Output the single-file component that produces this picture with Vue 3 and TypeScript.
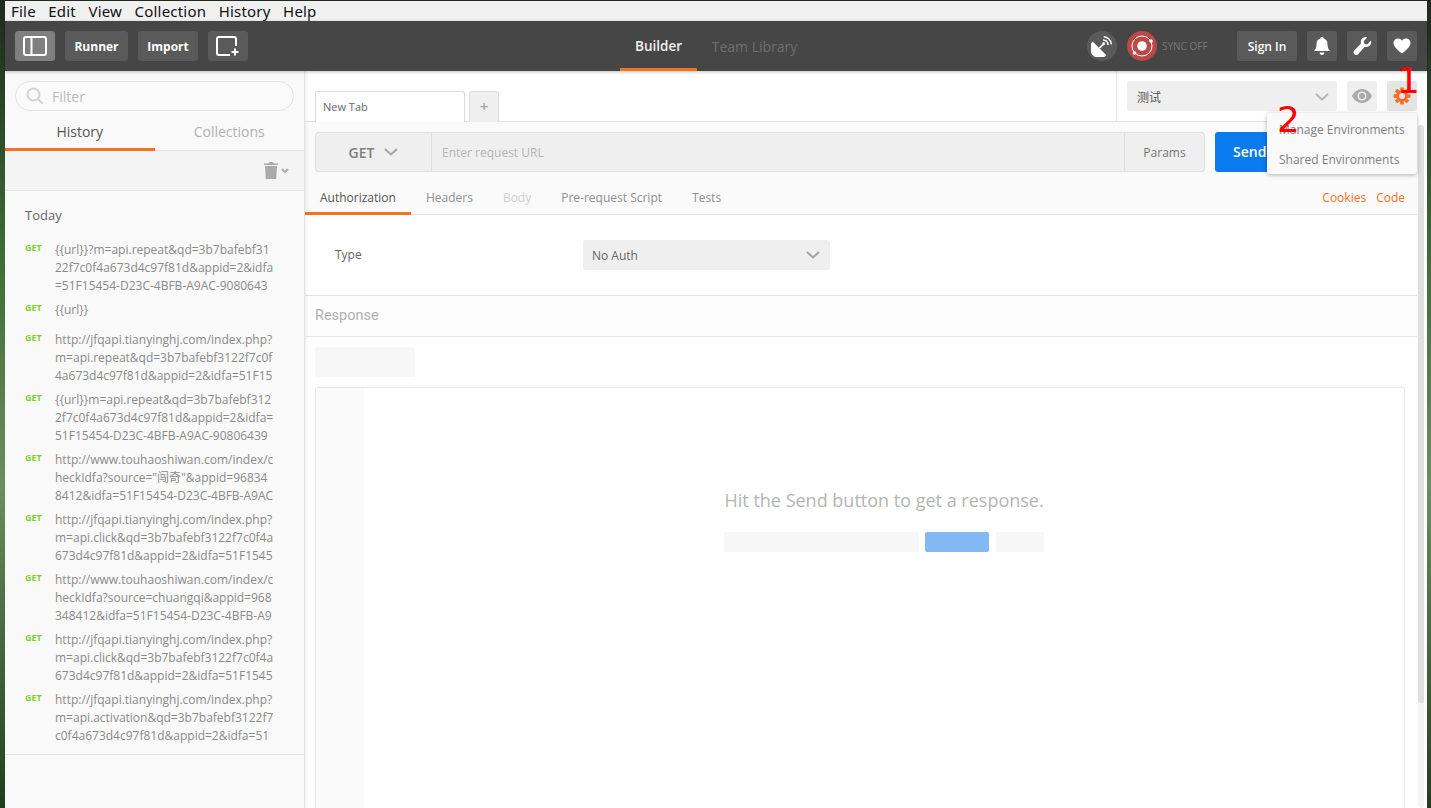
<script setup lang="ts">
interface HistoryRow { lines: string[]; tall?: boolean }
const history: HistoryRow[] = [
  { lines: ['{{url}}?m=api.repeat&qd=3b7bafebf31', '22f7c0f4a673d4c97f81d&appid=2&idfa', '=51F15454-D23C-4BFB-A9AC-9080643'] },
  { lines: ['{{url}}'], tall: true },
  { lines: ['http://jfqapi.tianyinghj.com/index.php?', 'm=api.repeat&qd=3b7bafebf3122f7c0f', '4a673d4c97f81d&appid=2&idfa=51F15'] },
  { lines: ['{{url}}m=api.repeat&qd=3b7bafebf312', '2f7c0f4a673d4c97f81d&appid=2&idfa=', '51F15454-D23C-4BFB-A9AC-90806439'] },
  { lines: ['http://www.touhaoshiwan.com/index/c', 'heckIdfa?source="闯奇"&appid=96834', '8412&idfa=51F15454-D23C-4BFB-A9AC'] },
  { lines: ['http://jfqapi.tianyinghj.com/index.php?', 'm=api.click&qd=3b7bafebf3122f7c0f4a', '673d4c97f81d&appid=2&idfa=51F1545'] },
  { lines: ['http://www.touhaoshiwan.com/index/c', 'heckIdfa?source=chuangqi&appid=968', '348412&idfa=51F15454-D23C-4BFB-A9'] },
  { lines: ['http://jfqapi.tianyinghj.com/index.php?', 'm=api.click&qd=3b7bafebf3122f7c0f4a', '673d4c97f81d&appid=2&idfa=51F1545'] },
  { lines: ['http://jfqapi.tianyinghj.com/index.php?', 'm=api.activation&qd=3b7bafebf3122f7', 'c0f4a673d4c97f81d&appid=2&idfa=51'] },
]
const menus = ['File', 'Edit', 'View', 'Collection', 'History', 'Help']
const reqTabs = [
  { label: 'Authorization', cls: 'active' },
  { label: 'Headers', cls: '' },
  { label: 'Body', cls: 'off' },
  { label: 'Pre-request Script', cls: '' },
  { label: 'Tests', cls: '' },
]
</script>

<template>
  <div class="desktop">
    <div class="window">
      <nav class="menubar">
        <span v-for="m in menus" :key="m">{{ m }}</span>
      </nav>

      <header class="toolbar">
        <div class="tb-left">
          <button class="tb-btn icon on">
            <svg width="24" height="20" viewBox="0 0 24 20" fill="none" stroke="#fff" stroke-width="2"><rect x="1" y="1" width="22" height="18" rx="2"/><path d="M8.5 1v18"/></svg>
          </button>
          <button class="tb-btn text">Runner</button>
          <button class="tb-btn text">Import</button>
          <button class="tb-btn icon">
            <svg width="24" height="20" viewBox="0 0 24 20" fill="none" stroke="#fff" stroke-width="2"><path d="M14 19H3a2 2 0 0 1-2-2V3a2 2 0 0 1 2-2h15a2 2 0 0 1 2 2v7"/><path d="M19 12.500v7M15.500 16h7"/></svg>
          </button>
        </div>
        <div class="tb-center">
          <span class="nav-tab current">Builder</span>
          <span class="nav-tab">Team Library</span>
        </div>
        <div class="tb-right">
          <span class="round sat">
            <svg width="22" height="22" viewBox="0 0 20 20" fill="#fff"><path d="M1.500 6 14 18.500A8.840 8.840 0 0 1 1.500 6z"/><path d="M7.500 12 11 8.500" stroke="#fff" stroke-width="1.500"/><circle cx="11.500" cy="8" r="1.300"/><path d="M11 4.500a4.500 4.500 0 0 1 4.500 4.500M11.500 1.500a7.500 7.500 0 0 1 7 7" fill="none" stroke="#fff" stroke-width="1.400"/></svg>
          </span>
          <span class="round sync">
            <svg width="26" height="26" viewBox="0 0 26 26" fill="none" stroke="#fff"><circle cx="13" cy="13" r="10" stroke-width="1"/><circle cx="13" cy="13" r="4.800" fill="#fff" stroke="none"/><circle cx="22" cy="8" r="1.800" fill="#fff" stroke="none"/><circle cx="5.500" cy="20" r="1.800" fill="#fff" stroke="none"/></svg>
          </span>
          <span class="sync-label">SYNC OFF</span>
          <button class="tb-btn text signin">Sign In</button>
          <button class="tb-btn square">
            <svg width="18" height="20" viewBox="0 0 18 20" fill="#fff"><path d="M9 1c.9 0 1.500.6 1.600 1.400C13.200 3 14.500 5 14.500 8c0 4 1.200 5.500 2.500 7H1c1.300-1.500 2.500-3 2.500-7 0-3 1.300-5 3.900-5.600C7.500 1.600 8.100 1 9 1z"/><path d="M6.500 16.500h5a2.500 2.500 0 0 1-5 0z"/></svg>
          </button>
          <button class="tb-btn square">
            <svg width="20" height="20" viewBox="0 0 20 20" fill="#fff"><path d="M19 4.500c.5 2 0 4-1.500 5.300-1.400 1.200-3.100 1.500-4.800 1L6.300 18a2.600 2.600 0 0 1-3.800.2 2.600 2.600 0 0 1-.2-3.800L9 7.500c-.5-1.800-.1-3.600 1.200-4.900C11.600 1.200 13.500.700 15.500 1.200L11.800 5l.6 2.800 2.800.6z"/></svg>
          </button>
          <button class="tb-btn square">
            <svg width="18" height="16" viewBox="0 0 18 16" fill="#fff"><path d="M9 15.500C3.500 11 .5 8.300.5 5A4.400 4.400 0 0 1 5 .5c1.700 0 3.100.8 4 2.200C9.900 1.300 11.300.5 13 .5A4.400 4.400 0 0 1 17.500 5c0 3.300-3 6-8.500 10.500z"/></svg>
          </button>
        </div>
      </header>

      <div class="body">
        <aside class="sidebar">
          <div class="filter-wrap">
            <div class="filter">
              <svg width="18" height="18" viewBox="0 0 18 18" fill="none" stroke="#d4d4d4" stroke-width="2"><circle cx="7.500" cy="7.500" r="6"/><path d="m12 12 4.500 4.500"/></svg>
              <span>Filter</span>
            </div>
          </div>
          <div class="side-tabs">
            <span class="side-tab current">History</span>
            <span class="side-tab">Collections</span>
          </div>
          <div class="trash-row">
            <svg width="14" height="17" viewBox="0 0 14 17" fill="#aaa"><path d="M5 0h4l.5 1.500H14V3H0V1.500h4.500zM1 4h12l-.8 13H1.800z"/></svg>
            <svg class="mini" width="8" height="6" viewBox="0 0 8 6" fill="none" stroke="#aaa" stroke-width="2"><path d="m1 1 3 3 3-3"/></svg>
          </div>
          <div class="hist">
            <div class="today">Today</div>
            <div v-for="(row, i) in history" :key="i" class="hist-row" :class="{ tall: row.tall }">
              <span class="get">GET</span>
              <div class="url"><div v-for="(l, j) in row.lines" :key="j">{{ l }}</div></div>
            </div>
          </div>
          <div class="hist-end"></div>
        </aside>

        <main class="main">
          <div class="tabstrip">
            <div class="tabs">
              <div class="tab">New Tab</div>
              <div class="tab-add">+</div>
            </div>
            <div class="env">
              <div class="env-select">
                <span>测试</span>
                <svg width="14" height="8" viewBox="0 0 14 8" fill="none" stroke="#b5b5b5" stroke-width="2"><path d="m1 1 6 5.500L13 1"/></svg>
              </div>
              <button class="env-btn">
                <svg width="20" height="14" viewBox="0 0 20 14" fill="#aaa"><path fill-rule="evenodd" d="M10 0c4.500 0 8 3 10 7-2 4-5.500 7-10 7S2 11 0 7c2-4 5.500-7 10-7zm0 2.500a4.500 4.500 0 1 0 0 9 4.500 4.500 0 0 0 0-9z"/><circle cx="10" cy="7" r="3"/></svg>
              </button>
              <button class="env-btn">
                <svg width="18" height="18" viewBox="0 0 18 18" fill="none" stroke="#f26b2a"><circle cx="9" cy="9" r="4.500" stroke-width="3"/><path stroke-width="3.500" d="M9 .5v3M9 14.500v3M.5 9h3M14.500 9h3M3 3l2.100 2.100M12.900 12.900 15 15M3 15l2.100-2.100M12.900 5.100 15 3"/></svg>
              </button>
            </div>
          </div>

          <div class="work">
            <div class="request">
              <div class="url-row">
                <div class="urlbar">
                  <div class="method">
                    <span>GET</span>
                    <svg width="14" height="8" viewBox="0 0 14 8" fill="none" stroke="#a5a5a5" stroke-width="2"><path d="m1 1 6 5.500L13 1"/></svg>
                  </div>
                  <div class="url-input">Enter request URL</div>
                  <div class="params">Params</div>
                </div>
                <div class="send">Send</div>
              </div>
              <div class="req-tabs">
                <span v-for="t in reqTabs" :key="t.label" class="req-tab" :class="t.cls">{{ t.label }}</span>
                <span class="req-links"><span>Cookies</span><span>Code</span></span>
              </div>
            </div>

            <div class="auth">
              <span class="auth-label">Type</span>
              <div class="auth-select">
                <span>No Auth</span>
                <svg width="14" height="8" viewBox="0 0 14 8" fill="none" stroke="#a5a5a5" stroke-width="2"><path d="m1 1 6 5.500L13 1"/></svg>
              </div>
            </div>

            <div class="resp-head">Response</div>
            <div class="resp-body">
              <div class="skeleton-top"></div>
              <div class="resp-card">
                <div class="gutter"></div>
                <div class="hit">
                  <div class="hit-title">Hit the Send button to get a response.</div>
                  <div class="hit-bars">
                    <span class="b1"></span><span class="b2"></span><span class="b3"></span>
                  </div>
                </div>
              </div>
            </div>
          </div>

          <div class="scroll"><div class="thumb"></div></div>

          <div class="dropdown">
            <div>Manage Environments</div>
            <div>Shared Environments</div>
          </div>
          <span class="mark one">1</span>
          <span class="mark two">2</span>
        </main>
      </div>
    </div>
  </div>
</template>

<style>
html, body { margin: 0; height: 100%; overflow: hidden; }
</style>

<style scoped>
.desktop {
  width: 1431px; height: 808px; box-sizing: border-box; overflow: hidden;
  padding: 1px 4px 0 5px;
  background: linear-gradient(180deg, #1d2a1c 0, #3c6a35 30%, #6b8f5e 60%, #1f3f1c 100%);
  font-family: "Open Sans", "Noto Sans CJK SC", sans-serif;
}
.window { height: 807px; display: flex; flex-direction: column; background: #fff; }
.menubar {
  height: 20px; flex: none; background: #f0f0f0; display: flex; gap: 12.500px; padding-left: 6px;
  font: 15px/20px "Noto Sans", sans-serif; letter-spacing: .2px; color: #111;
}
.toolbar {
  height: 50px; flex: none; background: #464646; display: flex; align-items: center; position: relative;
  box-shadow: 0 1px 3px rgba(0,0,0,.25); z-index: 3;
}
button { border: 0; padding: 0; font-family: inherit; cursor: default; }
.tb-left { display: flex; gap: 10px; padding-left: 10px; width: 600px; box-sizing: border-box; }
.tb-btn {
  height: 30px; background: #5a5a5a; border-radius: 3px; color: #fff; display: flex; align-items: center; justify-content: center;
  font-size: 12px; font-weight: 700;
}
.tb-btn.on { background: #7f7f7f; }
.tb-btn.icon { width: 40px; }
.tb-btn.text { width: 63px; }
.tb-btn.text + .tb-btn.text { width: 60px; }
.tb-center { display: flex; height: 50px; }
.nav-tab {
  width: 77px; margin-right: 5px; text-align: center; line-height: 51px; font-size: 14px; color: #6f6f6f; font-weight: 400; box-sizing: border-box; white-space: nowrap;
}
.nav-tab.current { color: #f0f0f0; font-weight: 600; font-size: 13.500px; margin-left: 15px; border-bottom: 3px solid #f47023; margin-right: 14px; }
.nav-tab:last-child { width: 87px; }
.tb-right { display: flex; align-items: center; margin-left: auto; padding-right: 10px; }
.round { width: 30px; height: 30px; border-radius: 50%; display: flex; align-items: center; justify-content: center; }
.sat { background: #5a5a5a; margin-right: 10px; }
.sync { background: #b94a48; }
.sync-label { font-size: 10px; color: #777; width: 65px; margin-left: 5px; margin-right: 10px; white-space: nowrap; }
.tb-btn.signin { width: 60px !important; margin-right: 10px; font-size: 12px; font-weight: 600; }
.tb-btn.square { width: 30px; margin-right: 10px; }
.tb-btn.square:last-child { margin-right: 0; }

.body { flex: 1; min-height: 0; display: flex; }
.sidebar {
  width: 299px; flex: none; background: #f9f9f9; border-right: 1px solid #e4e4e4; box-shadow: 1px 0 3px rgba(0,0,0,.08); z-index: 2;
  display: flex; flex-direction: column;
}
.filter-wrap { padding: 10px 10px 0; }
.filter {
  height: 30px; border: 1px solid #e2e2e2; border-radius: 15px; background: #fbfbfb; display: flex; align-items: center; gap: 8px; padding-left: 10px;
  font-size: 14px; color: #bbb; box-sizing: border-box;
}
.side-tabs { display: flex; height: 39px; border-bottom: 1px solid #e2e2e2; margin-top: 0; }
.side-tab { flex: 1; text-align: center; font-size: 14px; line-height: 41px; color: #b0b0b0; margin-bottom: -1px; box-sizing: border-box; }
.side-tab.current { color: #555; border-bottom: 3px solid #f47023; }
.trash-row {
  height: 39px; flex: none; background: #f4f4f4; border-bottom: 1px solid #e4e4e4; display: flex; align-items: center; justify-content: flex-end; gap: 3px; padding-right: 15px;
}
.hist { padding: 0 0 3px 20px; }
.today { font-size: 13px; color: #666; height: 18px; padding-top: 15px; margin-bottom: 17px; line-height: 18px; }
.hist-row { display: flex; font-size: 12px; line-height: 18px; color: #8a8a8a; height: 54px; margin-bottom: 6px; white-space: nowrap; }
.hist-row:first-of-type { margin-bottom: 7px; }
.hist-row.tall { height: 24px; margin-bottom: 6px; }
.get { width: 30px; flex: none; font-size: 9px; font-weight: 700; color: #80d030; line-height: 14px; }
.url { font-size: 12px; }
.hist-end { border-top: 1px solid #e2e2e2; }

.main { flex: 1; min-width: 0; display: flex; flex-direction: column; position: relative; }
.tabstrip { height: 50px; flex: none; display: flex; justify-content: space-between; padding-left: 10px; margin-right: 10px; border-bottom: 1px solid #e2e2e2; box-sizing: content-box; }
.tabs { display: flex; align-items: flex-end; gap: 4px; margin-bottom: -1px; }
.tab {
  width: 150px; height: 31px; box-sizing: border-box; background: #fff; border: 1px solid #dcdcdc; border-bottom: 0; border-radius: 3px 3px 0 0; padding-left: 7px; font-size: 11px; line-height: 29px; color: #666;
}
.tab-add {
  width: 30px; height: 31px; box-sizing: border-box; background: #efefef; border: 1px solid #dcdcdc; border-bottom: 0; border-radius: 3px 3px 0 0; text-align: center; font-size: 15px; line-height: 28px; font-weight: 600; color: #a5a5a5;
}
.env { width: 301px; box-sizing: border-box; border-left: 1px solid #e2e2e2; display: flex; align-items: center; gap: 10px; padding-left: 10px; padding-bottom: 0; }
.env-select { width: 210px; height: 30px; box-sizing: border-box; background: #efefef; border-radius: 3px; display: flex; align-items: center; justify-content: space-between; padding: 2px 8px 0 10px; font-size: 12px; color: #555; }
.env-btn { width: 30px; height: 30px; background: #efefef; border-radius: 3px; display: flex; align-items: center; justify-content: center; }
.env-btn:last-child { background: #e4e4e4; }

.work { flex: 1; min-height: 0; margin-right: 10px; display: flex; flex-direction: column; }
.request { background: #fafafa; height: 93px; box-sizing: border-box; padding-top: 10px; border-bottom: 1px solid #e2e2e2; flex: none; }
.url-row { display: flex; gap: 10px; padding: 0 130px 0 10px; }
.urlbar { flex: 1; display: flex; height: 40px; box-sizing: border-box; border: 1px solid #dedede; border-radius: 3px; background: #efefef; }
.method { width: 116px; box-sizing: border-box; border-right: 1px solid #dedede; display: flex; align-items: center; justify-content: center; gap: 10px; font-size: 14px; font-weight: 600; color: #808080; }
.url-input { flex: 1; padding-left: 10px; font-size: 12px; line-height: 40px; color: #b4b4b4; }
.params { width: 80px; box-sizing: border-box; border-left: 1px solid #dedede; text-align: center; font-size: 12px; line-height: 40px; color: #777; }
.send { width: 72px; height: 40px; box-sizing: border-box; background: #097bed; border-radius: 3px; color: #fff; font-size: 14px; font-weight: 600; line-height: 40px; padding-left: 18px; }
.req-tabs { display: flex; height: 33px; margin-top: 10px; font-size: 12px; line-height: 32px; color: #8f8f8f; }
.req-tab { padding: 0 15px; box-sizing: border-box; white-space: nowrap; }
.req-tab.active { color: #555; border-bottom: 3px solid #f47023; height: 33px; }
.req-tab.off { color: #cfcfcf; }
.req-links { margin-left: auto; display: flex; gap: 10px; color: #f47023; padding-right: 12px; }
.auth { height: 81px; box-sizing: border-box; flex: none; border-bottom: 1px solid #e2e2e2; display: flex; align-items: center; padding-left: 30px; font-size: 12px; color: #666; }
.auth-label { width: 248px; margin-top: -2px; }
.auth-select { width: 247px; height: 30px; box-sizing: border-box; background: #efefef; border-radius: 3px; display: flex; align-items: center; justify-content: space-between; padding: 0 10px 0 9px; color: #666; }
.resp-head { height: 41px; flex: none; box-sizing: border-box; border-bottom: 1px solid #e8e8e8; padding-left: 10px; font: 14.500px/40px Roboto, sans-serif; color: #b0b0b0; background: #fdfdfd; }
.resp-body { flex: 1; min-height: 0; padding: 10px 12px 0 10px; }
.skeleton-top { width: 100px; height: 30px; background: #f7f7f7; border-radius: 2px; }
.resp-card { margin-top: 10px; height: 480px; box-sizing: border-box; border: 1px solid #e9e9e9; border-bottom: 0; border-radius: 3px 3px 0 0; display: flex; }
.gutter { width: 48px; background: #fafafa; }
.hit { padding: 100px 0 0 360px; }
.hit-title { font-size: 18px; color: #b5b5b5; white-space: nowrap; line-height: 24px; padding-left: .5px; }
.hit-bars { display: flex; gap: 6px; margin-top: 20px; }
.hit-bars span { height: 20px; border-radius: 2px; display: block; }
.b1 { width: 195px; background: #f7f7f7; }
.b2 { width: 64px; background: #83b9f3; }
.b3 { width: 48px; margin-left: 1px; background: #f7f7f7; }
.scroll { position: absolute; top: 54px; bottom: 0; width: 6px; background: #f5f5f5; border-radius: 3px; right: 3px; }
.thumb { height: 578px; background: #e0e0e0; border-radius: 3px 3px 2px 2px; }
.dropdown {
  position: absolute; top: 42px; left: 962px; width: 150px; height: 61px; box-sizing: border-box; padding: 2px 0 0 12px; background: #f9f9f9; border-radius: 3px; box-shadow: 0 1px 4px rgba(0,0,0,.3); z-index: 4; font-size: 12px; color: #808080; line-height: 30px; white-space: nowrap;
}
.mark { position: absolute; z-index: 5; color: #f00; font: 400 36px/36px "DejaVu Sans", sans-serif; }
.mark.one { left: 1092px; top: -8px; }
.mark.two { left: 972px; top: 31px; }
</style>
